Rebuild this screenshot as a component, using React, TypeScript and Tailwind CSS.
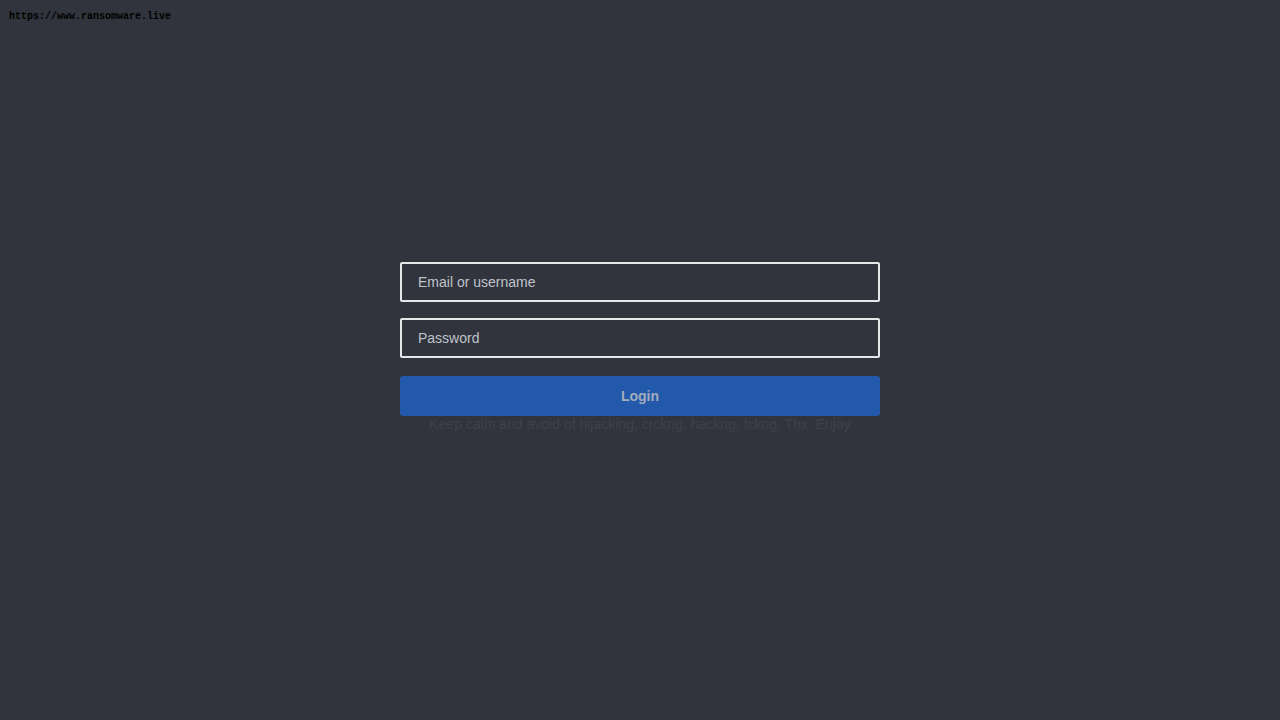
export default function App() {
  return (
    <div className="min-h-screen w-full bg-[#31343d] font-['Liberation_Sans',Arial,sans-serif]">
      <div className="pl-[9px] pt-[11px] font-['Liberation_Mono',monospace] text-[10px] font-bold leading-[12px] text-black">
        https://www.ransomware.live
      </div>
      <form className="mx-auto mt-[239px] flex w-[480px] flex-col" onSubmit={(e) => e.preventDefault()}>
        <input
          type="text"
          placeholder="Email or username"
          className="h-[40px] w-full rounded-[2px] border-2 border-[#e4e6ea] bg-transparent px-4 text-[14px] text-[#bfc3ca] outline-none placeholder:text-[#bfc3ca]"
        />
        <input
          type="password"
          placeholder="Password"
          className="mt-4 h-[40px] w-full rounded-[2px] border-2 border-[#e4e6ea] bg-transparent px-4 text-[14px] text-[#bfc3ca] outline-none placeholder:text-[#bfc3ca]"
        />
        <button
          type="submit"
          className="mt-[18px] h-[40px] w-full rounded-[3px] bg-[#2259ab] text-[14px] font-bold text-[#a3acbb]"
        >
          Login
        </button>
        <p className="text-center text-[14px] leading-[16px] text-[#3e4149]">
          Keep calm and avoid of hijacking, crckng, hackng, fckng. Thx. Enjoy
        </p>
      </form>
    </div>
  );
}
